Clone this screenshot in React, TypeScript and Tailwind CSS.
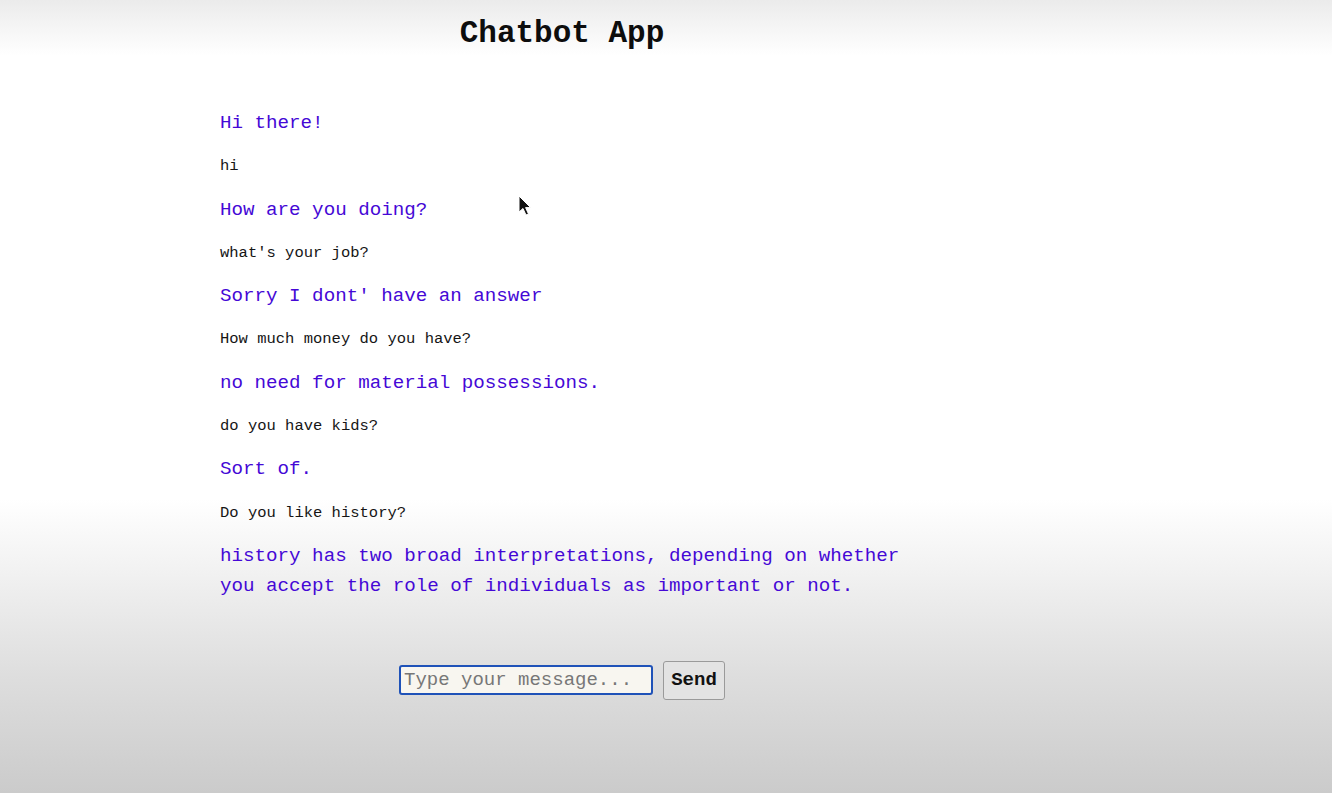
import React, { useState } from "react";

type Message = {
  from: "bot" | "user";
  text: string;
};

const messages: Message[] = [
  { from: "bot", text: "Hi there!" },
  { from: "user", text: "hi" },
  { from: "bot", text: "How are you doing?" },
  { from: "user", text: "what's your job?" },
  { from: "bot", text: "Sorry I dont' have an answer" },
  { from: "user", text: "How much money do you have?" },
  { from: "bot", text: "no need for material possessions." },
  { from: "user", text: "do you have kids?" },
  { from: "bot", text: "Sort of." },
  { from: "user", text: "Do you like history?" },
  {
    from: "bot",
    text: "history has two broad interpretations, depending on whether you accept the role of individuals as important or not.",
  },
];

function Cursor() {
  return (
    <svg
      className="absolute left-[518px] top-[195px]"
      width="14"
      height="22"
      viewBox="0 0 14 22"
    >
      <path
        d="M1 1 L1 17 L5 13.5 L8 20 L10.5 19 L7.6 12.6 L12.6 12.6 Z"
        fill="#111"
        stroke="#fff"
        strokeWidth="1"
      />
    </svg>
  );
}

export default function App() {
  const [input, setInput] = useState("");

  return (
    <div className="relative h-[793px] overflow-hidden bg-[linear-gradient(to_bottom,#ebebeb_0%,#ffffff_7%,#ffffff_63%,#dedede_85%,#cbcbcb_100%)] font-['Liberation_Mono','Courier_New',monospace]">
      <div className="ml-[220px] w-[684px] pt-[16px]">
        <h1 className="text-center text-[31px] leading-[36px] font-bold text-[#0d0d0d]">
          Chatbot App
        </h1>

        <div className="mt-[56px] flex flex-col gap-[18.3px]">
          {messages.map((m, i) =>
            m.from === "bot" ? (
              <p
                key={i}
                className="text-[19.2px] leading-[30px] text-[#4508d6]"
              >
                {m.text}
              </p>
            ) : (
              <p
                key={i}
                className="text-[15.5px] leading-[20px] text-[#151515]"
              >
                {m.text}
              </p>
            ),
          )}
        </div>

        <form
          className="mt-[60px] flex items-center justify-center gap-[10px]"
          onSubmit={(e) => e.preventDefault()}
        >
          <input
            type="text"
            value={input}
            onChange={(e) => setInput(e.target.value)}
            placeholder="Type your message..."
            className="h-[30px] w-[254px] rounded-[3px] border-2 border-[#1f52b8] bg-[#f8f6f0] px-[3px] text-[19px] text-[#222] placeholder:text-[#777] outline-none"
          />
          <button
            type="submit"
            className="h-[39px] w-[62px] rounded-[3px] border border-[#9a9a9a] bg-[#e3e3e3] text-[19px] font-bold text-[#111]"
          >
            Send
          </button>
        </form>
      </div>
      <Cursor />
    </div>
  );
}
